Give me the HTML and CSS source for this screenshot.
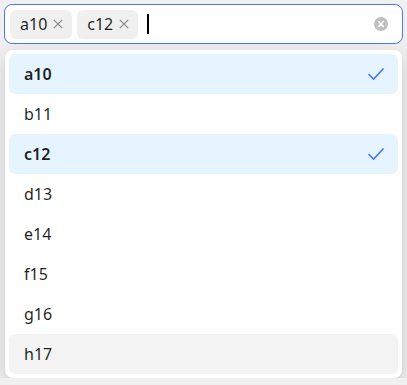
FILE: index.html
```html
<!DOCTYPE html>
<html>
<head>
<meta charset="utf-8">
<link rel="stylesheet" href="styles.css">
</head>
<body>
<div class="wrap">
  <div class="select">
    <div class="tags">
      <span class="tag">a10<svg class="tag-x" width="10" height="10" viewBox="0 0 10 10"><path d="M0.8 0.8 L9.2 9.2 M9.2 0.8 L0.8 9.2" stroke="rgba(0,0,0,0.45)" stroke-width="1.1"/></svg></span>
      <span class="tag">c12<svg class="tag-x" width="10" height="10" viewBox="0 0 10 10"><path d="M0.8 0.8 L9.2 9.2 M9.2 0.8 L0.8 9.2" stroke="rgba(0,0,0,0.45)" stroke-width="1.1"/></svg></span>
      <span class="caret"></span>
    </div>
    <span class="clear">
      <svg width="14" height="14" viewBox="0 0 14 14"><circle cx="7" cy="7" r="7" fill="#bfbfbf"/><path d="M4.6 4.6 L9.4 9.4 M9.4 4.6 L4.6 9.4" stroke="#fff" stroke-width="1.4" stroke-linecap="round"/></svg>
    </span>
  </div>
  <div class="dropdown">
    <div class="opt sel">a10<svg class="check" width="18" height="14" viewBox="0 0 18 14"><path d="M1.5 7.2 L6.6 12 L16.5 1.5" fill="none" stroke="#4a78f5" stroke-width="1.6"/></svg></div>
    <div class="opt">b11</div>
    <div class="opt sel">c12<svg class="check" width="18" height="14" viewBox="0 0 18 14"><path d="M1.5 7.2 L6.6 12 L16.5 1.5" fill="none" stroke="#4a78f5" stroke-width="1.6"/></svg></div>
    <div class="opt">d13</div>
    <div class="opt">e14</div>
    <div class="opt">f15</div>
    <div class="opt">g16</div>
    <div class="opt hover">h17</div>
  </div>
</div>
</body>
</html>
```
FILE: styles.css
```css
html, body {
  margin: 0;
  padding: 0;
  background: #f0f0f0;
}
body {
  font-family: "Noto Sans", "Open Sans", sans-serif;
  font-size: 16px;
  color: rgba(0,0,0,0.88);
}
.wrap {
  padding: 4px 4px 0 4px;
  display: flex;
  flex-direction: column;
  gap: 6px;
}
.select {
  height: 40px;
  box-sizing: border-box;
  border: 1px solid #4a78f5;
  border-radius: 8px;
  background: #fff;
  display: flex;
  align-items: center;
  padding: 0 14px 0 5px;
  justify-content: space-between;
}
.tags {
  display: flex;
  align-items: center;
  gap: 5px;
}
.tag {
  height: 29px;
  box-sizing: border-box;
  background: rgba(0,0,0,0.06);
  border-radius: 6px;
  padding: 0 9px 0 10px;
  display: flex;
  align-items: center;
  line-height: 29px;
}
.tag-x {
  margin-left: 6px;
}
.caret {
  width: 2px;
  height: 20px;
  background: #000;
  margin-left: 4px;
}
.clear {
  display: flex;
}
.dropdown {
  margin: 0 1px;
  background: #fff;
  border-radius: 8px;
  padding: 4px;
  box-shadow: 0 6px 16px 0 rgba(0,0,0,0.08), 0 3px 6px -4px rgba(0,0,0,0.12), 0 9px 28px 8px rgba(0,0,0,0.05);
  display: flex;
  flex-direction: column;
}
.opt {
  height: 40px;
  display: flex;
  align-items: center;
  justify-content: space-between;
  padding: 0 13px 0 15px;
  border-radius: 6px;
}
.opt.sel {
  background: #e6f4ff;
  font-weight: 600;
}
.opt.hover {
  background: #f3f3f3;
}
```
